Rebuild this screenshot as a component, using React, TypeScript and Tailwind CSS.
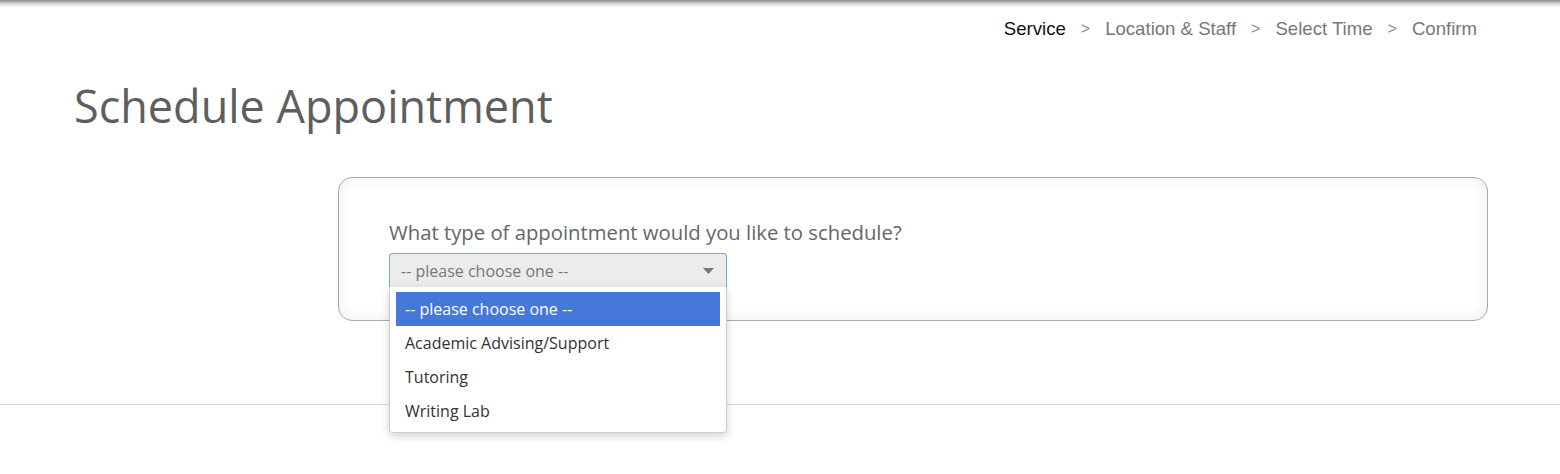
import { useState } from "react";

const steps = ["Service", "Location & Staff", "Select Time", "Confirm"];
const options = ["-- please choose one --", "Academic Advising/Support", "Tutoring", "Writing Lab"];

export default function App() {
  const [selected, setSelected] = useState(0);

  return (
    <div className="relative w-[1560px] h-[474px] bg-white overflow-hidden font-['Open_Sans',sans-serif]">
      <div className="h-[8px] bg-gradient-to-b from-[#8a8a8a] via-[#dedede] to-white" />

      <nav className="flex justify-end items-center pr-[83px] mt-[10px] font-['Liberation_Sans',Arial,sans-serif] text-[18.6px] leading-[22px]">
        {steps.map((step, i) => (
          <div key={step} className="flex items-center">
            {i > 0 && <span className="text-[#8a8a8a] mx-[15px] text-[16px]">&gt;</span>}
            <span className={i === 0 ? "text-[#111]" : "text-[#777]"}>{step}</span>
          </div>
        ))}
      </nav>

      <h1 className="ml-[74px] mt-[38px] text-[45px] leading-[56px] text-[#5e5e5e] font-normal">Schedule Appointment</h1>

      <div className="ml-[338px] mt-[43px] w-[1150px] h-[144px] rounded-[14px] border border-[#a9a9a9] bg-white shadow-[inset_0_0_14px_rgba(0,0,0,0.08)] pl-[50px] pt-[40px]">
        <p className="text-[20.3px] leading-[28px] text-[#666]">What type of appointment would you like to schedule?</p>
        <div className="relative mt-[7px] w-[338px]">
          <div className="h-[35px] bg-[#ececec] border border-b-0 border-[#6fa6e8] rounded-t-[4px] flex items-center justify-between pl-[11px] pr-[12px]">
            <span className="text-[16px] text-[#777]">-- please choose one --</span>
            <svg width="11" height="6" viewBox="0 0 11 6">
              <path d="M0 0 H11 L5.5 6 Z" fill="#777" />
            </svg>
          </div>
          <ul className="absolute left-0 top-[34px] z-10 w-[338px] bg-white rounded-b-[4px] border border-[#cfcfcf] border-t-0 shadow-[0_3px_8px_rgba(0,0,0,0.18)] px-[6px] pt-[5px] pb-[4px]">
            {options.map((opt, i) => (
              <li
                key={opt}
                onClick={() => setSelected(i)}
                className={`h-[34px] flex items-center pl-[9px] text-[16px] cursor-pointer ${
                  i === selected ? "bg-[#4677db] text-white" : "text-[#333]"
                }`}
              >
                {opt}
              </li>
            ))}
          </ul>
        </div>
      </div>

      <div className="mt-[83px] border-t border-[#d6d6d6]" />
    </div>
  );
}
